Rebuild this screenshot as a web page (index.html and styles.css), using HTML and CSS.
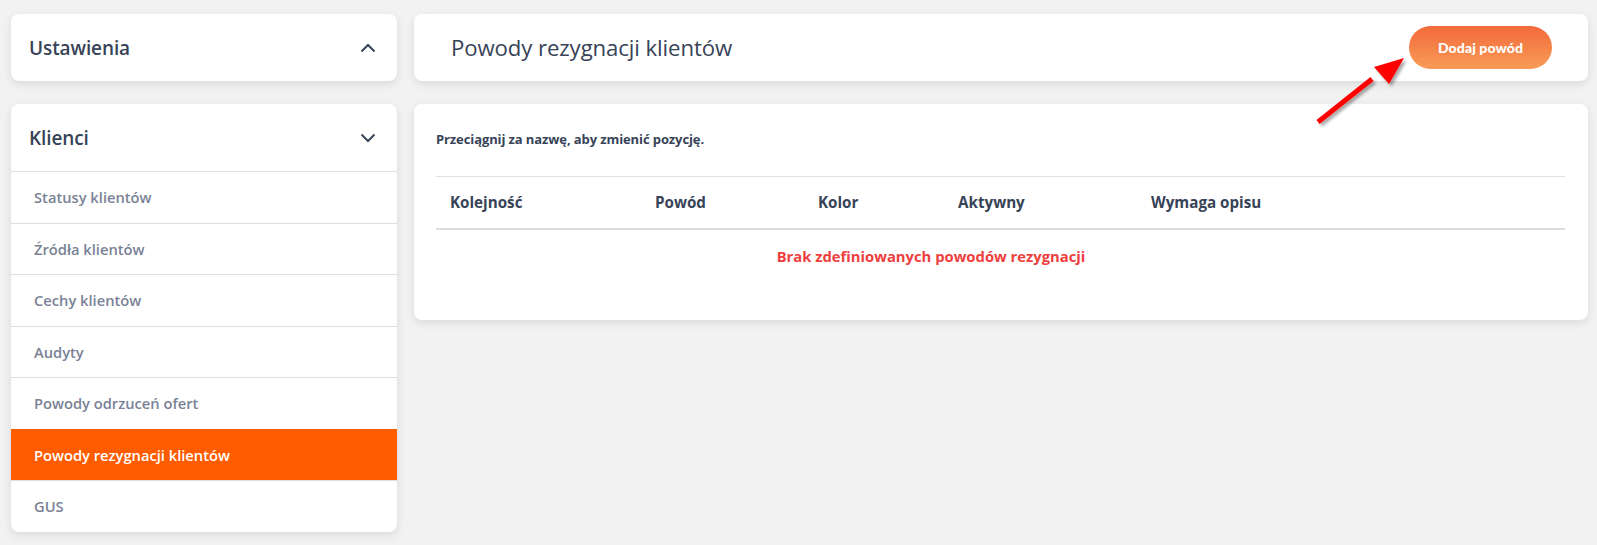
FILE: index.html
```html
<!DOCTYPE html>
<html lang="pl">
<head>
<meta charset="utf-8">
<title>Powody rezygnacji klientów</title>
<link rel="stylesheet" href="styles.css">
</head>
<body>
<div class="page">
  <aside class="sidebar">
    <section class="card">
      <div class="card-head">
        <span class="card-title">Ustawienia</span>
        <svg class="chev" width="16" height="10" viewBox="0 0 16 10"><path d="M1.5 8.5 L8 2 L14.5 8.5" fill="none" stroke="#3a4658" stroke-width="2"/></svg>
      </div>
    </section>
    <section class="card">
      <div class="card-head">
        <span class="card-title">Klienci</span>
        <svg class="chev" width="16" height="10" viewBox="0 0 16 10"><path d="M1.5 1.5 L8 8 L14.5 1.5" fill="none" stroke="#3a4658" stroke-width="2"/></svg>
      </div>
      <ul class="menu">
        <li class="menu-item">Statusy klientów</li>
        <li class="menu-item">Źródła klientów</li>
        <li class="menu-item">Cechy klientów</li>
        <li class="menu-item">Audyty</li>
        <li class="menu-item">Powody odrzuceń ofert</li>
        <li class="menu-item active">Powody rezygnacji klientów</li>
        <li class="menu-item">GUS</li>
      </ul>
    </section>
  </aside>
  <main class="content">
    <section class="card topbar">
      <h1 class="page-title">Powody rezygnacji klientów</h1>
      <button class="btn-add">Dodaj powód</button>
    </section>
    <section class="card panel">
      <p class="hint">Przeciągnij za nazwę, aby zmienić pozycję.</p>
      <table class="tbl">
        <colgroup>
          <col class="c1"><col class="c2"><col class="c3"><col class="c4"><col class="c5"><col class="c6">
        </colgroup>
        <thead>
          <tr><th>Kolejność</th><th>Powód</th><th>Kolor</th><th>Aktywny</th><th>Wymaga opisu</th><th></th></tr>
        </thead>
        <tbody>
          <tr><td class="empty" colspan="5">Brak zdefiniowanych powodów rezygnacji</td><td></td></tr>
        </tbody>
      </table>
    </section>
  </main>
</div>
<svg class="arrow" width="110" height="90" viewBox="0 0 110 90">
  <defs>
    <filter id="sh" x="-20%" y="-20%" width="140%" height="140%">
      <feDropShadow dx="2.5" dy="2.5" stdDeviation="1.5" flood-color="#000" flood-opacity="0.35"/>
    </filter>
  </defs>
  <g filter="url(#sh)" fill="#ff0000" stroke="none">
    <line x1="18" y1="78" x2="72" y2="35" stroke="#ff0000" stroke-width="5"/>
    <polygon points="104,14 74,23 89,40"/>
  </g>
</svg>
</body>
</html>
```
FILE: styles.css
```css
* { box-sizing: border-box; }
html, body { margin: 0; padding: 0; }
body {
  background: #f2f2f2;
  font-family: "Open Sans", "Noto Sans", sans-serif;
  color: #374357;
  width: 1597px;
  height: 545px;
  overflow: hidden;
  position: relative;
}
.page {
  display: flex;
  gap: 17px;
  padding: 14px 9px 0 11px;
}
.sidebar {
  width: 386px;
  flex: none;
  display: flex;
  flex-direction: column;
  gap: 23px;
}
.card {
  background: #fff;
  border-radius: 8px;
  box-shadow: 0 3px 10px rgba(0,0,0,0.10);
}
.card-head {
  height: 67px;
  display: flex;
  align-items: center;
  justify-content: space-between;
  padding: 0 21px 0 18px;
}
.card-title {
  font-size: 19px;
  font-weight: 600;
  color: #374357;
  letter-spacing: -0.1px;
}
.chev { display: block; }
.menu {
  list-style: none;
  margin: 0;
  padding: 0;
}
.menu-item {
  border-top: 1px solid #dedede;
  padding: 0 23px;
  height: 51.5px;
  display: flex;
  align-items: center;
  font-size: 14.7px;
  font-weight: 600;
  color: #7a8296;
}
.menu-item.active {
  background: #ff5c00;
  color: #fff;
  border-top-color: #ff5c00;
}
.menu-item:last-child {
  border-radius: 0 0 8px 8px;
}
.content {
  flex: 1;
  display: flex;
  flex-direction: column;
  gap: 23px;
}
.topbar {
  height: 67px;
  display: flex;
  align-items: center;
  justify-content: space-between;
  padding: 0 36px 0 37px;
}
.page-title {
  margin: 0;
  font-size: 22.2px;
  font-weight: 500;
  color: #374357;
  letter-spacing: -0.1px;
}
.btn-add {
  width: 143px;
  height: 43px;
  border: 0;
  border-radius: 22px;
  background: linear-gradient(180deg, #f36a3b 0%, #f89c57 100%);
  color: #fff;
  font-family: "Lato", "Open Sans", sans-serif;
  font-weight: 900;
  font-size: 14px;
  letter-spacing: 0.1px;
}
.panel {
  padding: 27px 23px 37px 22px;
}
.hint {
  margin: 0 0 28px;
  font-size: 13px;
  font-weight: 700;
  color: #374357;
  line-height: 17px;
  letter-spacing: -0.1px;
}
.tbl {
  width: 100%;
  border-collapse: collapse;
  table-layout: fixed;
}
.c1 { width: 205px; }
.c2 { width: 163px; }
.c3 { width: 140px; }
.c4 { width: 193px; }
.c5 { width: 289px; }
.c6 { width: 139px; }
.tbl th {
  text-align: left;
  font-size: 15.2px;
  font-weight: 700;
  color: #374357;
  padding: 0 14px;
  height: 52px;
  border-top: 1px solid #dee0e3;
  border-bottom: 2px solid #dadde2;
}
.tbl td {
  height: 54px;
  padding: 0 14px;
}
.tbl td.empty {
  text-align: center;
  color: #ee3e3e;
  font-weight: 700;
  font-size: 14.8px;
}
.arrow {
  position: absolute;
  left: 1300px;
  top: 44px;
}
```
